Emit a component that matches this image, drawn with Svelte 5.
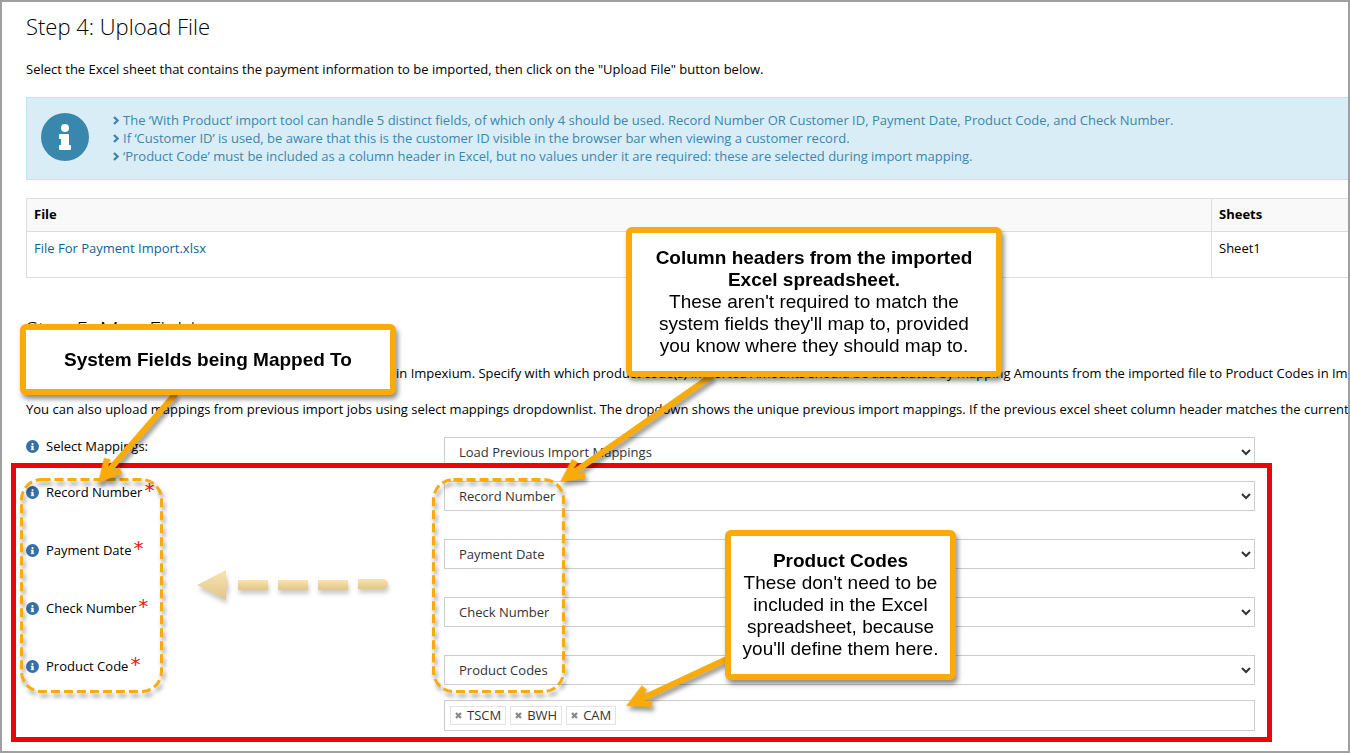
<script>
  const notes = [
    'The ‘With Product’ import tool can handle 5 distinct fields, of which only 4 should be used. Record Number OR Customer ID, Payment Date, Product Code, and Check Number.',
    'If ‘Customer ID’ is used, be aware that this is the customer ID visible in the browser bar when viewing a customer record.',
    '‘Product Code’ must be included as a column header in Excel, but no values under it are required: these are selected during import mapping.'
  ];

  const files = [{ name: 'File For Payment Import.xlsx', sheet: 'Sheet1' }];

  const headers = ['Record Number', 'Payment Date', 'Check Number', 'Product Codes'];

  let fields = $state([
    { id: 'record', label: 'Record Number', value: 'Record Number' },
    { id: 'date', label: 'Payment Date', value: 'Payment Date' },
    { id: 'check', label: 'Check Number', value: 'Check Number' },
    { id: 'code', label: 'Product Code', value: 'Product Codes' }
  ]);

  let codes = $state(['TSCM', 'BWH', 'CAM']);

  // tip position, angle and length of each callout arrow
  const arrows = [
    { x: 98, y: 483, angle: -49, length: 118 },
    { x: 560, y: 482, angle: -35, length: 186 },
    { x: 626, y: 706, angle: -25, length: 112 }
  ];

  const removeCode = (code) => {
    codes = codes.filter((c) => c !== code);
  };
</script>

{#snippet infoIcon()}
  <svg class="info-icon" viewBox="0 0 48 48" aria-hidden="true">
    <circle cx="24" cy="24" r="24" fill="currentColor" />
    <circle cx="24" cy="15" r="4" fill="#fff" />
    <path d="M19 22h8v11h2v3H19v-3h2v-8h-2z" fill="#fff" stroke="#fff" stroke-width="2" stroke-linejoin="round" />
  </svg>
{/snippet}

<main class="page">
  <section>
    <h2>Step 4: Upload File</h2>
    <p>Select the Excel sheet that contains the payment information to be imported, then click on the "Upload File" button below.</p>

    <div class="alert">
      {@render infoIcon()}
      <ul>
        {#each notes as note}
          <li>
            <svg class="bullet" viewBox="0 0 6 9" aria-hidden="true">
              <path d="M1 1l3.600 3.500L1 8" fill="none" stroke="currentColor" stroke-width="2.300" />
            </svg>
            {note}
          </li>
        {/each}
      </ul>
    </div>

    <table>
      <thead>
        <tr>
          <th>File</th>
          <th class="sheet-col">Sheets</th>
        </tr>
      </thead>
      <tbody>
        {#each files as file}
          <tr>
            <td><a href="#file">{file.name}</a></td>
            <td>{file.sheet}</td>
          </tr>
        {/each}
      </tbody>
    </table>
  </section>

  <section class="step-map">
    <h2>Step 5: Map Fields</h2>
    <p class="intro">in Impexium. Specify with which product code(s) imported Amounts should be associated by mapping Amounts from the imported file to Product Codes in Impexium.</p>
    <p>You can also upload mappings from previous import jobs using select mappings dropdownlist. The dropdown shows the unique previous import mappings. If the previous excel sheet column header matches the current column</p>

    <form>
      <div class="row">
        <label for="mappings">{@render infoIcon()} Select Mappings:</label>
        <select id="mappings">
          <option>Load Previous Import Mappings</option>
        </select>
      </div>

      <div class="fields">
        {#each fields as field}
          <div class="row">
            <label class="required" for={field.id}>{@render infoIcon()} {field.label} <span class="star">*</span></label>
            <select id={field.id} bind:value={field.value}>
              {#each headers as header}
                <option value={header}>{header}</option>
              {/each}
            </select>
          </div>
        {/each}
      </div>

      <div class="row codes-row">
        <div class="codes">
          {#each codes as code}
            <span class="tag">
              <button type="button" aria-label="Remove {code}" onclick={() => removeCode(code)}>
                <svg viewBox="0 0 7 7" aria-hidden="true">
                  <path d="M1 1l5 5M6 1L1 6" stroke="currentColor" stroke-width="2.200" />
                </svg>
              </button>
              {code}
            </span>
          {/each}
          <input type="text" aria-label="Add product code" />
        </div>
      </div>
    </form>
  </section>

  <div class="highlight"></div>

  <svg class="marks" aria-hidden="true">
    <defs>
      <linearGradient id="pale" x1="0" y1="0" x2="0" y2="1">
        <stop offset="0" stop-color="#f8e3b0" />
        <stop offset="1" stop-color="#e1c68b" />
      </linearGradient>
    </defs>
    <g class="shadow" fill="none" stroke="#f9ab09" stroke-width="3" stroke-dasharray="9 4">
      <rect x="21.500" y="479.500" width="140" height="212" rx="20" />
      <rect x="433.500" y="479.500" width="130" height="212" rx="20" />
    </g>
    <g class="shadow soft" fill="url(#pale)">
      <path d="M197 585L226 570V580H228V590H226V600Z" />
      <rect x="238" y="580" width="30" height="10" />
      <rect x="278" y="580" width="30" height="10" />
      <rect x="318" y="580" width="30" height="10" />
      <path d="M358 579h25a5 5 0 0 1 0 10h-25z" />
    </g>
    <g class="shadow" fill="#f9ab09">
      {#each arrows as a}
        <path
          d="M0 0L23 -12L26 -6L19 -3H{a.length}V3H19L26 6L23 12Z"
          transform="translate({a.x} {a.y}) rotate({a.angle})"
        />
      {/each}
    </g>
  </svg>

  <aside class="callout system">
    <strong>System Fields being Mapped To</strong>
  </aside>
  <aside class="callout columns">
    <strong>Column headers from the imported Excel spreadsheet.</strong>
    <span>These aren't required to match the system fields they'll map to, provided you know where they should map to.</span>
  </aside>
  <aside class="callout products">
    <strong>Product Codes</strong>
    <span>These don't need to be included in the Excel spreadsheet, because you'll define them here.</span>
  </aside>
</main>

<style>
  :global(body) {
    background: #fff;
  }

  .page {
    position: relative;
    box-sizing: border-box;
    min-height: 100vh;
    padding: 11px 0 0 24px;
    border: 2px solid #a0a0a0;
    overflow: hidden;
    font-family: 'Open Sans', 'Noto Sans', sans-serif;
    font-size: 13px;
    line-height: 18px;
    color: #000;
  }

  h2 {
    margin: 0;
    font-size: 22px;
    font-weight: 300;
    line-height: 26px;
  }

  p {
    margin: 21px 0 19px;
    white-space: nowrap;
  }

  .alert {
    display: flex;
    align-items: flex-start;
    gap: 24px;
    padding: 13px 14px 14px;
    border: 1px solid #bce8f1;
    border-right: 0;
    background: #d9edf6;
    color: #3a87ad;
  }

  .alert .info-icon {
    flex: none;
    width: 48px;
    height: 48px;
    margin-top: 2px;
  }

  ul {
    margin: 0;
    padding: 0;
    list-style: none;
    white-space: nowrap;
  }

  li {
    display: flex;
    align-items: center;
    gap: 4px;
  }

  .bullet {
    width: 6px;
    height: 9px;
  }

  table {
    width: 100%;
    margin-top: 18px;
    border-collapse: collapse;
  }

  th,
  td {
    padding: 7px;
    border: 1px solid #ddd;
    border-right: 0;
    text-align: left;
    vertical-align: top;
  }

  th {
    padding: 6px 7px 8px;
    background: #f9f9f9;
    font-weight: 700;
  }

  td {
    height: 31px;
  }

  .sheet-col {
    width: 122px;
  }

  a {
    color: #08649a;
    text-decoration: none;
  }

  .step-map {
    margin-top: 38px;
  }

  .intro {
    margin: 22px 0 0;
    text-indent: 370px;
  }

  .intro + p {
    margin-top: 18px;
  }

  .row {
    display: grid;
    grid-template-columns: 418px 1fr;
    align-items: start;
    padding-right: 93px;
  }

  label {
    display: flex;
    align-items: center;
    gap: 8px;
    height: 18px;
  }

  .required {
    margin-top: 2px;
  }

  label .info-icon {
    width: 13px;
    height: 13px;
    margin-right: -1px;
    color: #3670a8;
  }

  .star {
    margin-left: -6px;
    padding-bottom: 4px;
    font-family: 'DejaVu Sans', sans-serif;
    font-size: 20px;
    color: #e02020;
  }

  select {
    box-sizing: border-box;
    width: 100%;
    height: 30px;
    padding: 0 10px;
    border: 1px solid #ccc;
    border-radius: 0;
    background: #fff;
    color: #333;
    font: inherit;
  }

  .fields {
    display: flex;
    flex-direction: column;
    gap: 28px;
    margin-top: 14px;
  }

  .codes-row {
    margin-top: 15px;
  }

  .codes {
    grid-column: 2;
    display: flex;
    align-items: center;
    gap: 4px;
    box-sizing: border-box;
    height: 31px;
    padding: 0 5px;
    border: 1px solid #ccc;
    color: #333;
  }

  .tag {
    display: flex;
    align-items: center;
    gap: 5px;
    padding: 0 4px;
    border: 1px solid #e3e3e3;
    line-height: 17px;
  }

  .tag button {
    display: flex;
    padding: 0;
    border: 0;
    background: none;
    color: #888;
    cursor: pointer;
  }

  .tag svg {
    width: 7px;
    height: 7px;
  }

  .codes input {
    flex: 1;
    min-width: 0;
    border: 0;
    outline: 0;
    background: none;
    font: inherit;
  }

  /* annotations drawn over the page */
  .highlight {
    position: absolute;
    top: 461px;
    left: 9px;
    right: 76px;
    box-sizing: border-box;
    height: 279px;
    border: 5px solid #ea0606;
    pointer-events: none;
  }

  .marks {
    position: absolute;
    top: -2px;
    left: -2px;
    width: 100%;
    height: 100%;
    pointer-events: none;
  }

  .shadow {
    filter: drop-shadow(2px 4px 2px rgba(0, 0, 0, 0.4));
  }

  .soft {
    filter: drop-shadow(1px 4px 2px rgba(0, 0, 0, 0.2));
  }

  .callout {
    position: absolute;
    box-sizing: border-box;
    display: flex;
    flex-direction: column;
    justify-content: center;
    border: 6px solid #f9ab09;
    border-radius: 6px;
    background: #fff;
    box-shadow: 2px 4px 5px rgba(0, 0, 0, 0.45);
    font-family: 'Liberation Sans', Arial, sans-serif;
    font-size: 19px;
    line-height: 22px;
    text-align: center;
  }

  .system {
    top: 322px;
    left: 18px;
    width: 376px;
    height: 71px;
  }

  .columns {
    top: 225px;
    left: 624px;
    width: 376px;
    height: 150px;
    padding: 0 16px;
  }

  .products {
    top: 528px;
    left: 723px;
    width: 231px;
    height: 150px;
    padding: 0 6px;
  }
</style>
